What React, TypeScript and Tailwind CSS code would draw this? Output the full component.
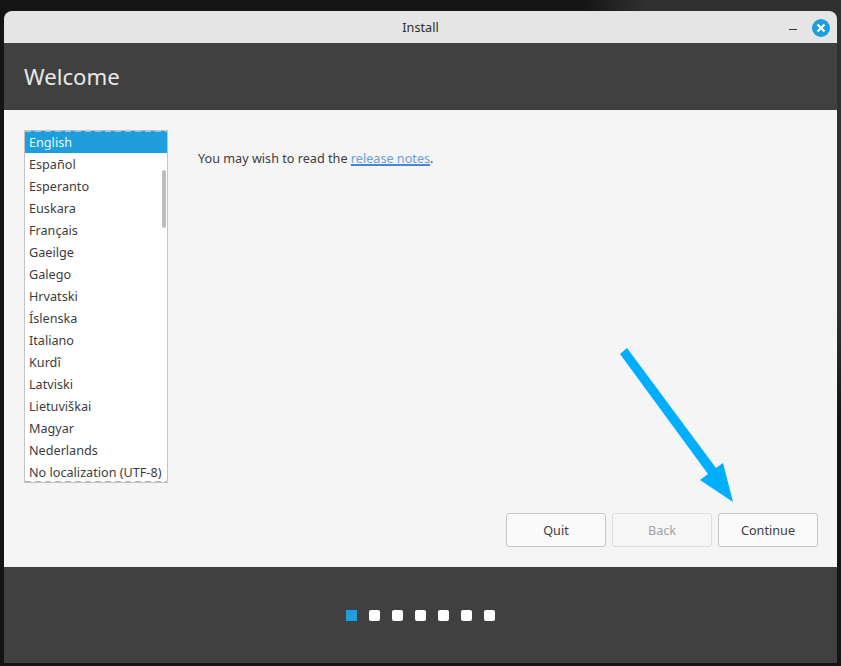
const languages = [
  "English",
  "Español",
  "Esperanto",
  "Euskara",
  "Français",
  "Gaeilge",
  "Galego",
  "Hrvatski",
  "Íslenska",
  "Italiano",
  "Kurdî",
  "Latviski",
  "Lietuviškai",
  "Magyar",
  "Nederlands",
  "No localization (UTF-8)",
];

function Arrow() {
  return (
    <svg className="absolute left-0 top-0" width="841" height="666" viewBox="0 0 841 666">
      <polygon
        points="620,354 627,348 716,468 723,463 733,502 700,480 708,474"
        fill="#00aeff"
      />
    </svg>
  );
}

export default function App() {
  const font = { fontFamily: '"Noto Sans", sans-serif' };

  return (
    <div
      className="relative h-[666px] w-[841px] overflow-hidden bg-[#111111] bg-[radial-gradient(ellipse_260px_420px_at_100%_0,#303030_75%,#141414_100%)] pl-[4px] pt-[11px] text-[12.65px] text-[#3d3d3d]"
      style={font}
    >
      <div className="flex h-[652px] w-[833px] flex-col overflow-hidden rounded-t-[8px]">
        {/* Title bar */}
        <div className="relative flex h-[32px] shrink-0 items-center justify-center bg-[#e5e5e5] pt-[1px] text-[#2e2e2e]">
          <span>Install</span>
          <div className="absolute right-[7px] top-[8px] flex items-center gap-[15px]">
            <div className="mt-[2px] h-px w-[8px] bg-[#333333]" />
            <div className="flex h-[18px] w-[18px] items-center justify-center rounded-full bg-[#1f9ede]">
              <svg width="10" height="10" viewBox="0 0 10 10">
                <path d="M1.5 1.5 8.5 8.5M8.5 1.5 1.5 8.5" stroke="#ffffff" strokeWidth="2.2" />
              </svg>
            </div>
          </div>
        </div>

        {/* Header */}
        <div className="flex h-[67px] shrink-0 items-center bg-[#404040] pl-[20px] text-[22.2px] text-[#e8e8e8]">
          Welcome
        </div>

        {/* Content */}
        <div className="flex h-[457px] shrink-0 flex-col bg-[#f5f5f5] pl-[20px] pr-[19px] pt-[20px]">
          <div className="flex h-[353px] shrink-0">
            <div className="relative h-[353px] w-[144px] shrink-0 overflow-hidden border border-[#c4c4c4] bg-white">
              {languages.map((name, i) => (
                <div
                  key={name}
                  className={
                    i === 0
                      ? "flex h-[22px] items-center whitespace-nowrap bg-[#1f9ede] pl-[4px] pt-[1px] text-[#e9f6fd]"
                      : "flex h-[22px] items-center whitespace-nowrap pl-[4px] pt-[1px]"
                  }
                >
                  {name}
                </div>
              ))}
              {/* Focus outline of the list, dashed at top and bottom */}
              <div className="absolute left-0 right-0 top-0 h-px bg-[repeating-linear-gradient(90deg,#8fcdee_0_6px,transparent_6px_10px)]" />
              <div className="absolute bottom-0 left-0 right-0 h-px bg-[repeating-linear-gradient(90deg,#b5b5b5_0_6px,transparent_6px_10px)]" />
              <div className="absolute right-[1px] top-[39px] h-[58px] w-[4px] rounded-full bg-[#bdbdbd]" />
            </div>
            <p className="ml-[30px] mt-[19px] h-fit">
              You may wish to read the{" "}
              <a className="text-[#6a9fdc] underline decoration-[#4a86d6] decoration-[1.5px]" href="#notes">
                release notes
              </a>
              .
            </p>
          </div>

          <div className="mt-[30px] flex justify-end gap-[6px]">
            <button className="h-[34px] w-[100px] rounded-[3px] border border-[#c6c6c6] bg-[#fafafa] pt-[1px]">Quit</button>
            <button className="h-[34px] w-[100px] rounded-[3px] border border-[#dedede] bg-[#f6f6f6] pt-[1px] text-[#a3a3a3]">
              Back
            </button>
            <button className="h-[34px] w-[100px] rounded-[3px] border border-[#c6c6c6] bg-[#fafafa] pt-[1px]">Continue</button>
          </div>
        </div>

        {/* Step dots */}
        <div className="flex flex-1 justify-center gap-[12px] bg-[#404040] pt-[43px]">
          <div className="h-[11px] w-[11px] bg-[#1f9ede]" />
          {[1, 2, 3, 4, 5, 6].map((step) => (
            <div key={step} className="h-[11px] w-[11px] rounded-[2px] bg-white" />
          ))}
        </div>
      </div>

      <Arrow />
    </div>
  );
}
